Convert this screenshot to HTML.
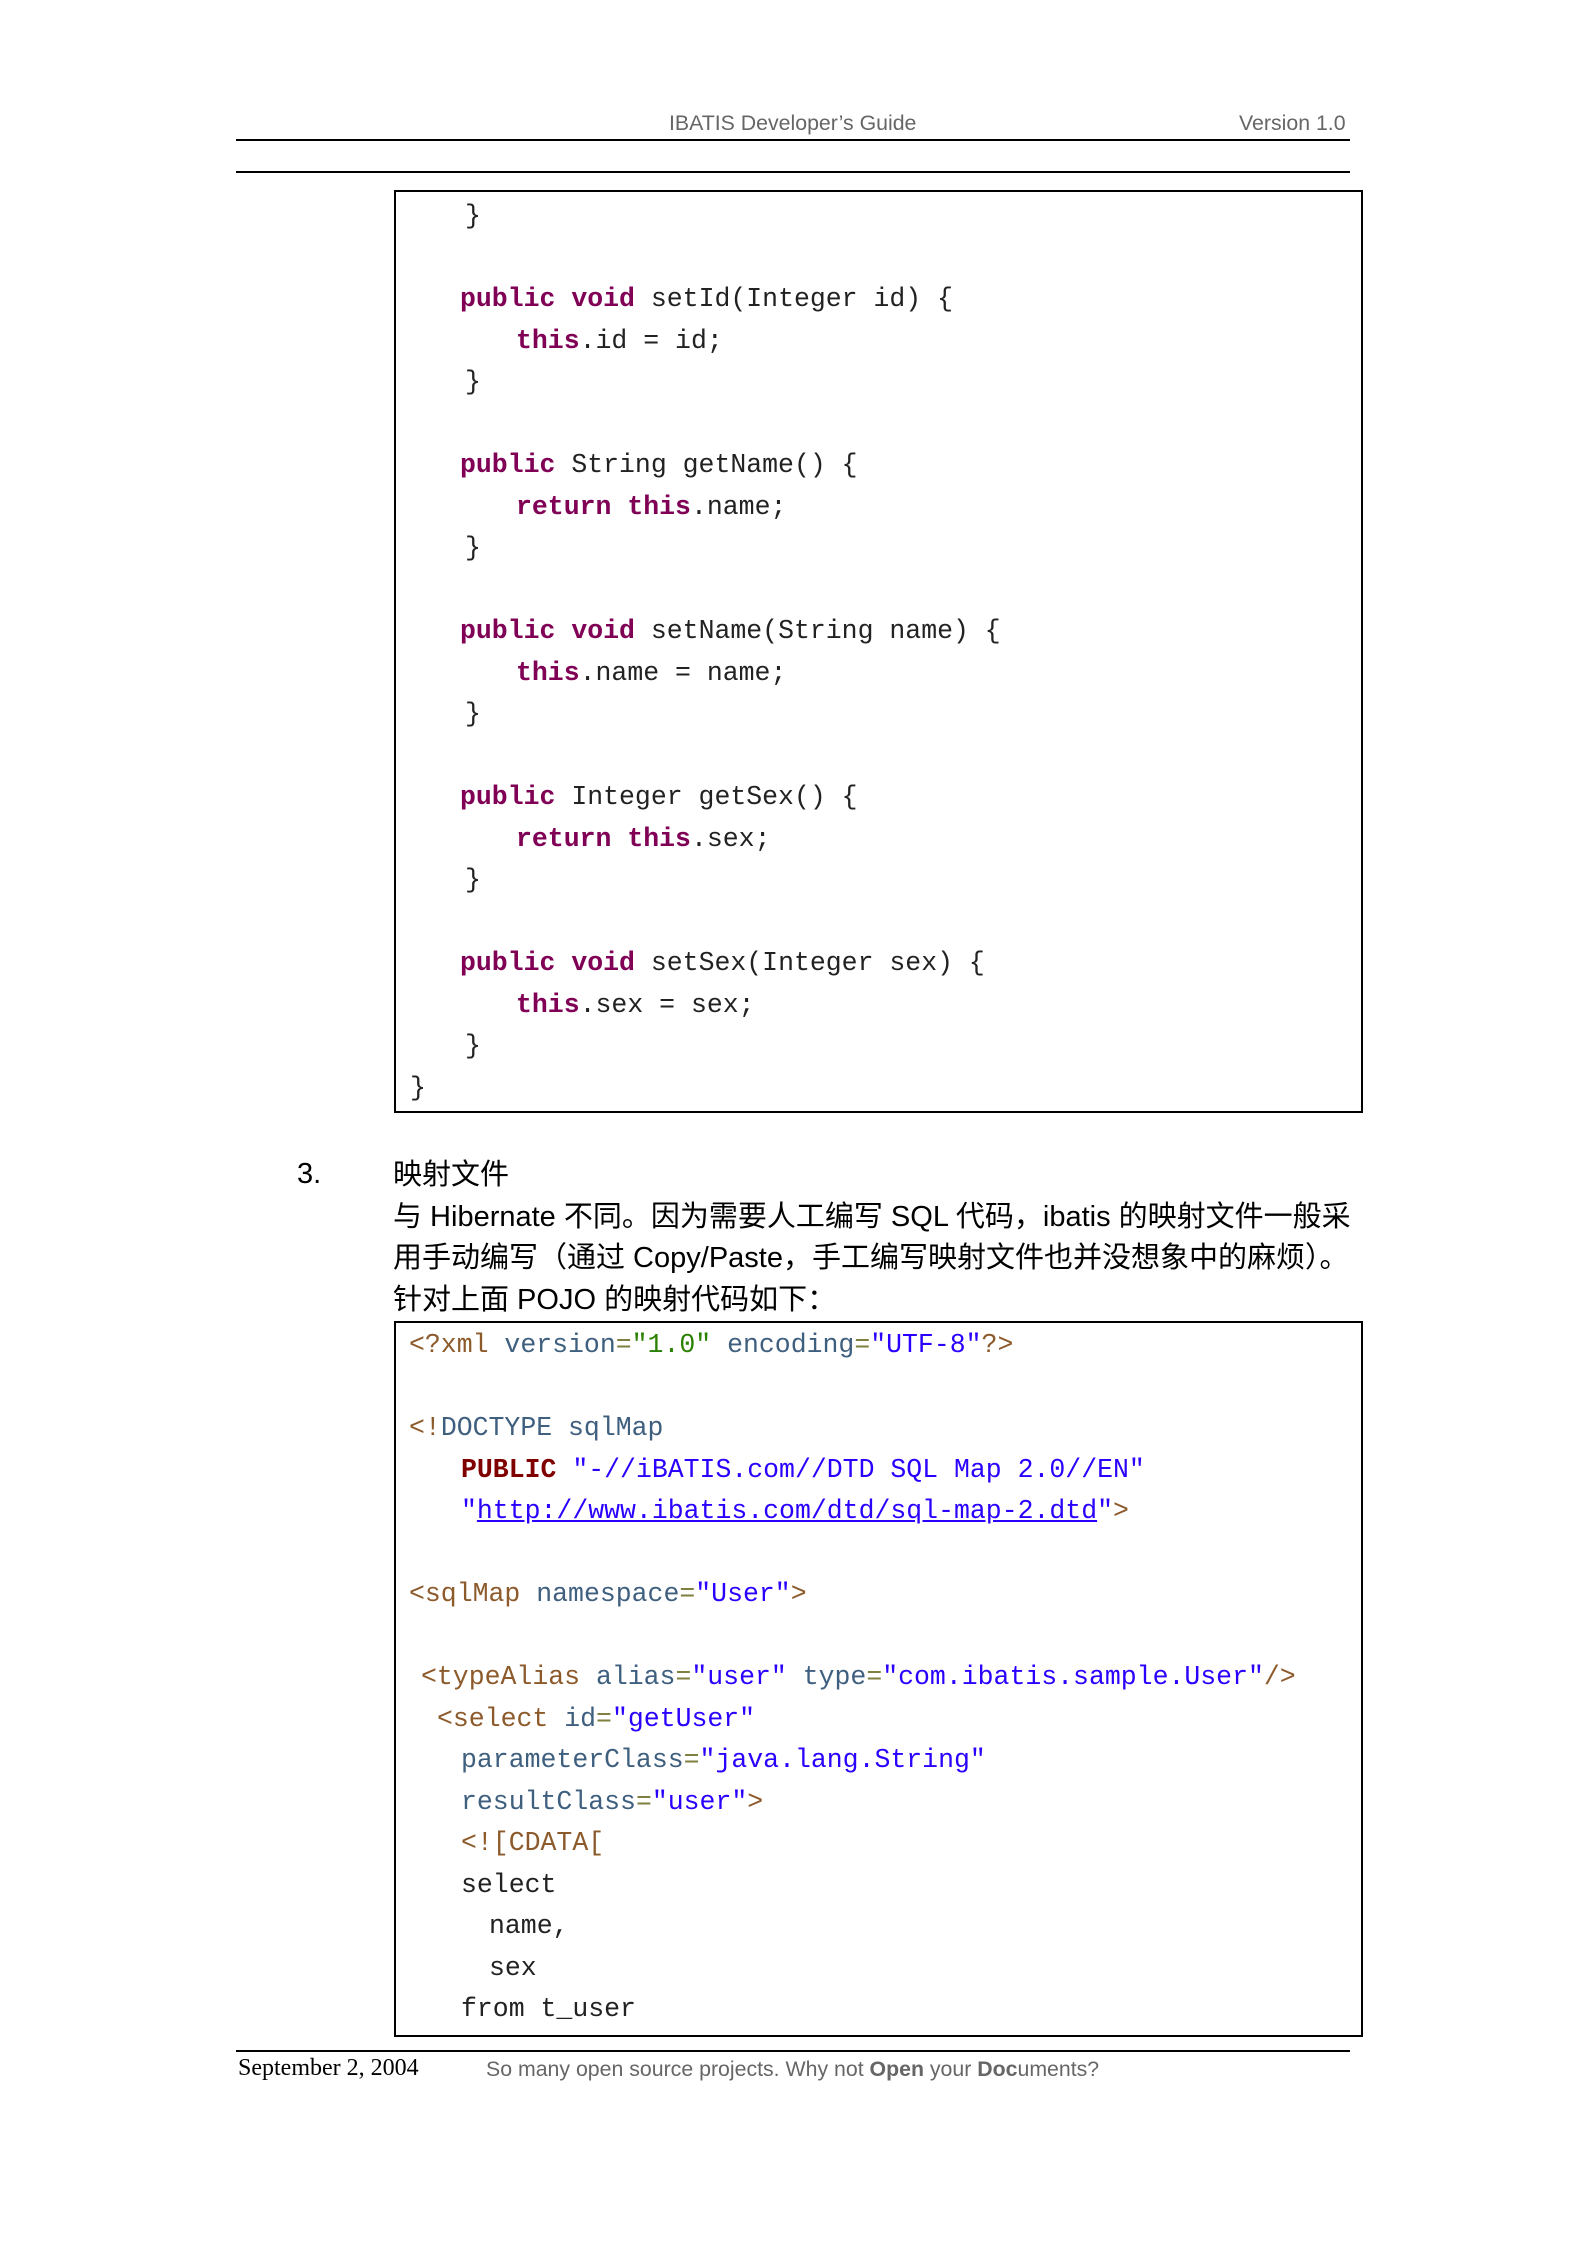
<!DOCTYPE html>
<html><head><meta charset="utf-8">
<style>
body{margin:0;background:#fff;}
#p{position:relative;width:1586px;height:2242px;overflow:hidden;background:#fff;}
.a{position:absolute;white-space:pre;}
.c{font-family:"Liberation Mono",monospace;font-size:26.5px;line-height:30px;color:#222;}
.hr{position:absolute;left:236px;width:1114px;height:2px;background:#000;}
.box{position:absolute;left:394px;width:965px;border:2px solid #000;}
.k{color:#7f0055;font-weight:bold;}
.t{color:#8c5a2b;}
.at{color:#3f5f7f;}
.v{color:#2a00ff;}
.g{color:#2a8000;}
.eq{color:#7f7f3f;}
.pb{color:#800000;font-weight:bold;}
.cj{font-family:"Liberation Sans","Noto Sans CJK SC",sans-serif;font-size:29px;line-height:34px;color:#000;}
.h{font-family:"Liberation Sans",sans-serif;font-size:21.3px;color:#666;}
</style></head><body><div id="p">
<div class="a h" style="left:669px;top:111px;">IBATIS Developer’s Guide</div>
<div class="a h" style="left:1239px;top:111px;">Version 1.0</div>
<div class="hr" style="top:139px;"></div>
<div class="hr" style="top:171px;"></div>

<div class="box" style="top:190px;height:919px;"></div>
<div class="a c" style="left:465px;top:201px;">}</div>
<div class="a c" style="left:460px;top:284px;"><span class="k">public</span> <span class="k">void</span> setId(Integer id) {</div>
<div class="a c" style="left:516px;top:325.5px;"><span class="k">this</span>.id = id;</div>
<div class="a c" style="left:465px;top:367px;">}</div>
<div class="a c" style="left:460px;top:450px;"><span class="k">public</span> String getName() {</div>
<div class="a c" style="left:516px;top:491.5px;"><span class="k">return</span> <span class="k">this</span>.name;</div>
<div class="a c" style="left:465px;top:533px;">}</div>
<div class="a c" style="left:460px;top:616px;"><span class="k">public</span> <span class="k">void</span> setName(String name) {</div>
<div class="a c" style="left:516px;top:657.5px;"><span class="k">this</span>.name = name;</div>
<div class="a c" style="left:465px;top:699px;">}</div>
<div class="a c" style="left:460px;top:782px;"><span class="k">public</span> Integer getSex() {</div>
<div class="a c" style="left:516px;top:823.5px;"><span class="k">return</span> <span class="k">this</span>.sex;</div>
<div class="a c" style="left:465px;top:865px;">}</div>
<div class="a c" style="left:460px;top:948px;"><span class="k">public</span> <span class="k">void</span> setSex(Integer sex) {</div>
<div class="a c" style="left:516px;top:989.5px;"><span class="k">this</span>.sex = sex;</div>
<div class="a c" style="left:465px;top:1031px;">}</div>
<div class="a c" style="left:410px;top:1072.5px;">}</div>

<div class="a" style="left:297px;top:1158px;font-family:'Liberation Sans',sans-serif;font-size:29px;">3.</div>
<div class="a cj" style="left:393px;top:1158px;">映射文件</div>
<div class="a cj" style="left:393px;top:1199.5px;">与 Hibernate 不同。因为需要人工编写 SQL 代码，ibatis 的映射文件一般采</div>
<div class="a cj" style="left:393px;top:1241px;">用手动编写（通过 Copy/Paste，手工编写映射文件也并没想象中的麻烦）。</div>
<div class="a cj" style="left:393px;top:1282.5px;">针对上面 POJO 的映射代码如下：</div>

<div class="box" style="top:1321px;height:712px;"></div>
<div class="a c" style="left:409px;top:1330px;"><span class="t">&lt;?xml</span> <span class="at">version</span><span class="eq">=</span><span class="g">"1.0"</span> <span class="at">encoding</span><span class="eq">=</span><span class="v">"UTF-8"</span><span class="t">?&gt;</span></div>
<div class="a c" style="left:409px;top:1413px;"><span class="t">&lt;!</span><span class="at">DOCTYPE sqlMap</span></div>
<div class="a c" style="left:461px;top:1454.5px;"><span class="pb">PUBLIC</span> <span class="v">"-//iBATIS.com//DTD SQL Map 2.0//EN"</span></div>
<div class="a c" style="left:461px;top:1496px;"><span class="v">"<u>http://www.ibatis.com/dtd/sql-map-2.dtd</u>"</span><span class="t">&gt;</span></div>
<div class="a c" style="left:409px;top:1579px;"><span class="t">&lt;sqlMap</span> <span class="at">namespace</span><span class="eq">=</span><span class="v">"User"</span><span class="t">&gt;</span></div>
<div class="a c" style="left:421px;top:1662px;"><span class="t">&lt;typeAlias</span> <span class="at">alias</span><span class="eq">=</span><span class="v">"user"</span> <span class="at">type</span><span class="eq">=</span><span class="v">"com.ibatis.sample.User"</span><span class="t">/&gt;</span></div>
<div class="a c" style="left:437px;top:1703.5px;"><span class="t">&lt;select</span> <span class="at">id</span><span class="eq">=</span><span class="v">"getUser"</span></div>
<div class="a c" style="left:461px;top:1745px;"><span class="at">parameterClass</span><span class="eq">=</span><span class="v">"java.lang.String"</span></div>
<div class="a c" style="left:461px;top:1786.5px;"><span class="at">resultClass</span><span class="eq">=</span><span class="v">"user"</span><span class="t">&gt;</span></div>
<div class="a c" style="left:461px;top:1828px;"><span class="t">&lt;![CDATA[</span></div>
<div class="a c" style="left:461px;top:1869.5px;">select</div>
<div class="a c" style="left:489px;top:1911px;">name,</div>
<div class="a c" style="left:489px;top:1952.5px;">sex</div>
<div class="a c" style="left:461px;top:1994px;">from t_user</div>

<div class="hr" style="top:2050px;"></div>
<div class="a" style="left:238px;top:2055px;font-family:'Liberation Serif',serif;font-size:24px;color:#000;">September 2, 2004</div>
<div class="a h" style="left:486px;top:2057px;">So many open source projects. Why not <b>Open</b> your <b>Doc</b>uments?</div>
</div></body></html>
